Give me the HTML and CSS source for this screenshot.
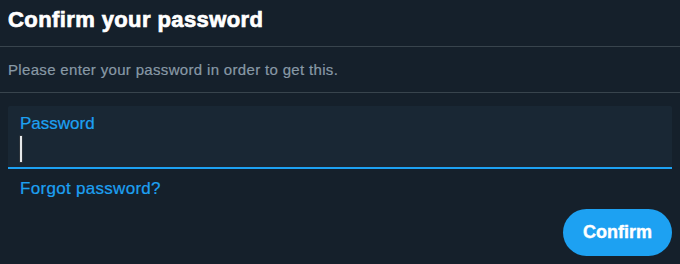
FILE: index.html
```html
<!DOCTYPE html>
<html>
<head>
<meta charset="utf-8">
<link rel="stylesheet" href="styles.css">
</head>
<body>
<div class="dialog">
  <div class="header"><h1 class="title">Confirm your password</h1></div>
  <div class="desc"><p class="desc-text">Please enter your password in order to get this.</p></div>
  <div class="form">
    <div class="field">
      <div class="label">Password</div>
      <div class="caret"></div>
    </div>
    <a class="forgot" href="#">Forgot password?</a>
    <div class="actions"><button class="confirm">Confirm</button></div>
  </div>
</div>
</body>
</html>
```
FILE: styles.css
```css
html, body {
  margin: 0;
  padding: 0;
  background: #15202b;
}
body {
  font-family: "Liberation Sans", Arial, sans-serif;
  width: 680px;
  height: 264px;
  overflow: hidden;
}
.header {
  padding: 7px 8px 13px;
  border-bottom: 1px solid #38444d;
}
.title {
  margin: 0;
  font-size: 22px;
  line-height: 26px;
  font-weight: 700;
  letter-spacing: 0.4px;
  color: #ffffff;
  -webkit-text-stroke: 0.7px #ffffff;
}
.desc {
  padding: 13px 8px 12px;
  border-bottom: 1px solid #38444d;
}
.desc-text {
  margin: 0;
  font-size: 15px;
  line-height: 20px;
  letter-spacing: 0.33px;
  color: #8899a6;
  -webkit-text-stroke: 0.2px #8899a6;
}
.form {
  padding: 13px 8px 0;
  display: flex;
  flex-direction: column;
}
.field {
  background: #192734;
  padding: 8px 12px 5px;
  border-bottom: 2px solid #1da1f2;
  border-radius: 2px 2px 0 0;
}
.label {
  font-size: 17px;
  line-height: 20px;
  color: #1da1f2;
  -webkit-text-stroke: 0.2px #1da1f2;
}
.caret {
  margin-top: 2px;
  width: 2px;
  height: 26px;
  background: #e6e9eb;
  box-shadow: 0 0 0 0.5px #444;
}
.forgot {
  margin-top: 10px;
  padding-left: 12px;
  font-size: 17px;
  line-height: 20px;
  letter-spacing: 0.3px;
  color: #1da1f2;
  -webkit-text-stroke: 0.2px #1da1f2;
  text-decoration: none;
  align-self: flex-start;
}
.actions {
  display: flex;
  justify-content: flex-end;
  margin-top: 10px;
}
.confirm {
  height: 47px;
  padding: 0 20px;
  border: none;
  border-radius: 24px;
  background: #1da1f2;
  color: #ffffff;
  font-family: "Liberation Sans", Arial, sans-serif;
  font-size: 18px;
  font-weight: 700;
  line-height: 47px;
  -webkit-text-stroke: 0.4px #ffffff;
}
```
